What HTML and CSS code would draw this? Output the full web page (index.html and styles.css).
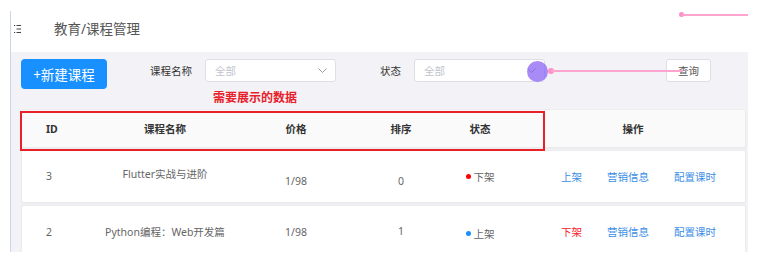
FILE: index.html
```html
<!DOCTYPE html>
<html lang="zh-CN">
<head>
  <meta charset="UTF-8">
  <meta name="viewport" content="width=device-width, initial-scale=1.0">
  <title>课程管理</title>
  <link rel="stylesheet" href="styles.css">
</head>
<body>
  <div class="page">
    <div class="topbar">
      <svg class="menu-icon" width="7" height="8" viewBox="0 0 7 8">
        <path d="M0 0.5H1.2M2.5 0.5H7M2.5 4H7M0 7.5H1.2M2.5 7.5H7" stroke="#444" stroke-width="1.1"/>
      </svg>
      <span class="crumb">教育/课程管理</span>
    </div>

    <div class="panel">
      <div class="toolbar">
        <button class="btn-new">+新建课程</button>
        <div class="filter">
          <label class="filter-label">课程名称</label>
          <div class="select"><span>全部</span>
            <svg class="chev" width="9" height="5" viewBox="0 0 9 5"><path d="M0.5 0.5L4.5 4.5L8.5 0.5" fill="none" stroke="#999" stroke-width="1"/></svg>
          </div>
        </div>
        <div class="filter filter-state">
          <label class="filter-label">状态</label>
          <div class="select"><span>全部</span>
            <svg class="chev" width="9" height="5" viewBox="0 0 9 5"><path d="M0.5 0.5L4.5 4.5L8.5 0.5" fill="none" stroke="#999" stroke-width="1"/></svg>
          </div>
        </div>
        <button class="btn-query">查询</button>
      </div>

      <div class="note">需要展示的数据</div>

      <div class="table">
        <div class="row head">
          <div class="cell id">ID</div>
          <div class="cell">课程名称</div>
          <div class="cell">价格</div>
          <div class="cell">排序</div>
          <div class="cell">状态</div>
          <div class="cell">操作</div>
        </div>
        <div class="row">
          <div class="cell id up1">3</div>
          <div class="cell up3">Flutter实战与进阶</div>
          <div class="cell dn4">1/98</div>
          <div class="cell dn4">0</div>
          <div class="cell"><span class="dot off"></span>下架</div>
          <div class="cell ops"><a class="link">上架</a><a class="link">营销信息</a><a class="link">配置课时</a></div>
        </div>
        <div class="row">
          <div class="cell id">2</div>
          <div class="cell">Python编程：Web开发篇</div>
          <div class="cell">1/98</div>
          <div class="cell up1">1</div>
          <div class="cell dn2"><span class="dot on"></span>上架</div>
          <div class="cell ops"><a class="link danger">下架</a><a class="link">营销信息</a><a class="link">配置课时</a></div>
        </div>
        <div class="mark-box"></div>
      </div>
    </div>

    <!-- annotation marks drawn over the screenshot -->
    <div class="pin pin-top"></div>
    <div class="pin-line pin-line-top"></div>
    <div class="touch"></div>
    <div class="pin pin-mid"></div>
    <div class="pin-line pin-line-mid"></div>
  </div>
</body>
</html>
```

FILE: styles.css
```css
* {
  box-sizing: border-box;
}

body {
  margin: 0;
  background: #fff;
  font-family: "Noto Sans", "Noto Sans CJK SC", sans-serif;
  color: #333;
}

.page {
  position: relative;
  margin: 11px 0 0 10px;
  width: 738px;
  height: 241px;
  border-left: 1px solid #ccd6e8;
}

.topbar {
  display: flex;
  align-items: flex-start;
  height: 41px;
  padding: 10px 0 0 3px;
}

.menu-icon {
  margin-top: 4px;
}

.crumb {
  margin-left: 33px;
  font-size: 13.5px;
  line-height: 16px;
  color: #555;
}

.panel {
  height: 200px;
  background: #f3f3f7;
  padding: 7px 1px 0 10px;
  overflow: hidden;
}

.toolbar {
  display: flex;
  align-items: flex-start;
  height: 30px;
}

.btn-new {
  width: 86px;
  height: 30px;
  border: none;
  border-radius: 4px;
  background: #1890ff;
  color: #fff;
  font-family: inherit;
  font-size: 13.5px;
  padding: 0;
}

.filter {
  display: flex;
  align-items: center;
  height: 23px;
  margin-left: 43px;
}

.filter-state {
  margin-left: 44px;
}

.filter-label {
  font-size: 10.5px;
  color: #333;
  margin-right: 13px;
}

.select {
  display: flex;
  align-items: center;
  justify-content: space-between;
  width: 131px;
  height: 23px;
  padding: 0 9px;
  background: #fff;
  border: 1px solid #dcdfe6;
  border-radius: 3px;
  font-size: 10.5px;
  color: #c0c4cc;
}

.chev {
  margin-right: -1px;
}

.btn-query {
  margin-left: 121px;
  width: 45px;
  height: 23px;
  padding: 0;
  background: #fff;
  border: 1px solid #dcdfe6;
  border-radius: 3px;
  font-family: inherit;
  font-size: 10.5px;
  color: #555;
}

.note {
  margin: 2px 0 0 192px;
  height: 14px;
  line-height: 14px;
  font-size: 12px;
  font-weight: bold;
  color: #e8202a;
}

.table {
  position: relative;
  margin-top: 4px;
  width: 725px;
}

.row {
  display: grid;
  grid-template-columns: 79px 128px 134px 76px 82px 224px;
  align-items: start;
  height: 53px;
  margin-top: 2px;
  padding-top: 19px;
  background: #fff;
  border: 1px solid #ececec;
  border-radius: 2px;
  box-shadow: 0 1px 2px rgba(0, 0, 0, 0.04);
  font-size: 10.5px;
  color: #666;
}

.row.head {
  height: 39px;
  margin-top: 0;
  padding-top: 0;
  align-items: center;
  background: #fafafa;
  font-weight: bold;
  color: #333;
}

.cell {
  line-height: 14px;
  text-align: center;
  white-space: nowrap;
}

.cell.id {
  text-align: left;
  padding-left: 24px;
}

.up1 { margin-top: -1px; }
.up3 { margin-top: -3px; }
.dn2 { margin-top: 2px; }
.dn4 { margin-top: 4px; }

.dot {
  display: inline-block;
  width: 5px;
  height: 5px;
  border-radius: 50%;
  margin-right: 3px;
  vertical-align: 2px;
}

.dot.off { background: #f00; }
.dot.on { background: #1890ff; }

.cell.ops {
  display: flex;
  gap: 25px;
  padding-left: 40px;
}

.link {
  color: #3a8ee6;
}

.link.danger {
  color: #f5222d;
}

.mark-box {
  position: absolute;
  left: -1px;
  top: 2px;
  width: 525px;
  height: 40px;
  border: 2px solid #e8202a;
}

.pin {
  position: absolute;
  width: 6px;
  height: 6px;
  border-radius: 50%;
  background: #ff8fc6;
}

.pin-line {
  position: absolute;
  height: 2px;
  background: #ffa3cf;
}

.pin-top {
  left: 668px;
  top: 1px;
  width: 5px;
  height: 5px;
}

.pin-line-top {
  left: 671px;
  top: 3px;
  width: 66px;
}

.touch {
  position: absolute;
  left: 516px;
  top: 50px;
  width: 21px;
  height: 21px;
  border-radius: 50%;
  background: rgba(140, 100, 245, 0.75);
}

.pin-mid {
  left: 537px;
  top: 57px;
}

.pin-line-mid {
  left: 540px;
  top: 59px;
  width: 132px;
}
```
